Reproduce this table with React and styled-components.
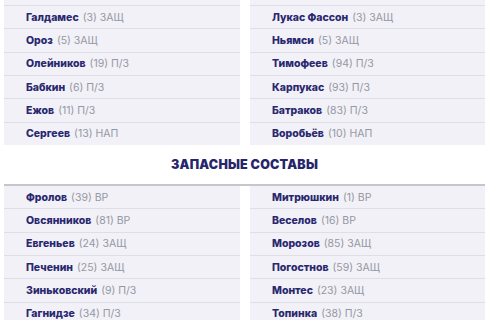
import React from "react";
import styled, { createGlobalStyle } from "styled-components";

const GlobalStyle = createGlobalStyle`
  body {
    margin: 0;
    background: #ffffff;
    font-family: "Inter", "Open Sans", sans-serif;
  }
`;

const Page = styled.div`
  width: 481px;
  padding-left: 4px;
`;

const Columns = styled.div`
  display: grid;
  grid-template-columns: 236px 235px;
  column-gap: 10px;
  border-top: ${(p) => (p.$framed ? "2px solid #c6c6cf" : "none")};
`;

const List = styled.ul`
  margin: 0;
  padding: 0;
  list-style: none;
  background: #f1f1f7;
`;

const Cut = styled.li`
  height: 5px;
`;

const Row = styled.li`
  display: flex;
  align-items: center;
  height: 22.33px;
  padding-left: 22px;
  border-top: ${(p) => (p.$first ? "none" : "1px solid #dedee7")};
  font-size: 10.5px;
  white-space: nowrap;
`;

const Name = styled.span`
  font-weight: 800;
  color: #29286f;
  margin-right: 4px;
`;

const Info = styled.span`
  font-weight: 400;
  color: #9697a3;
`;

const Title = styled.h2`
  margin: 0;
  height: 39px;
  display: flex;
  align-items: center;
  justify-content: center;
  font-size: 12.5px;
  font-weight: 900;
  color: #27266c;
  letter-spacing: 0.2px;
`;

const main = [
  [
    ["Галдамес", "(3) ЗАЩ"],
    ["Ороз", "(5) ЗАЩ"],
    ["Олейников", "(19) П/З"],
    ["Бабкин", "(6) П/З"],
    ["Ежов", "(11) П/З"],
    ["Сергеев", "(13) НАП"],
  ],
  [
    ["Лукас Фассон", "(3) ЗАЩ"],
    ["Ньямси", "(5) ЗАЩ"],
    ["Тимофеев", "(94) П/З"],
    ["Карпукас", "(93) П/З"],
    ["Батраков", "(83) П/З"],
    ["Воробьёв", "(10) НАП"],
  ],
];

const reserve = [
  [
    ["Фролов", "(39) ВР"],
    ["Овсянников", "(81) ВР"],
    ["Евгеньев", "(24) ЗАЩ"],
    ["Печенин", "(25) ЗАЩ"],
    ["Зиньковский", "(9) П/З"],
    ["Гагнидзе", "(34) П/З"],
  ],
  [
    ["Митрюшкин", "(1) ВР"],
    ["Веселов", "(16) ВР"],
    ["Морозов", "(85) ЗАЩ"],
    ["Погостнов", "(59) ЗАЩ"],
    ["Монтес", "(23) ЗАЩ"],
    ["Топинка", "(38) П/З"],
  ],
];

const TeamList = ({ players, cut }) => (
  <List>
    {cut && <Cut />}
    {players.map(([name, info], i) => (
      <Row key={name} $first={!cut && i === 0}>
        <Name>{name}</Name>
        <Info>{info}</Info>
      </Row>
    ))}
  </List>
);

export default function App() {
  return (
    <Page>
      <GlobalStyle />
      <Columns>
        <TeamList players={main[0]} cut />
        <TeamList players={main[1]} cut />
      </Columns>
      <Title>ЗАПАСНЫЕ СОСТАВЫ</Title>
      <Columns $framed>
        <TeamList players={reserve[0]} />
        <TeamList players={reserve[1]} />
      </Columns>
    </Page>
  );
}
